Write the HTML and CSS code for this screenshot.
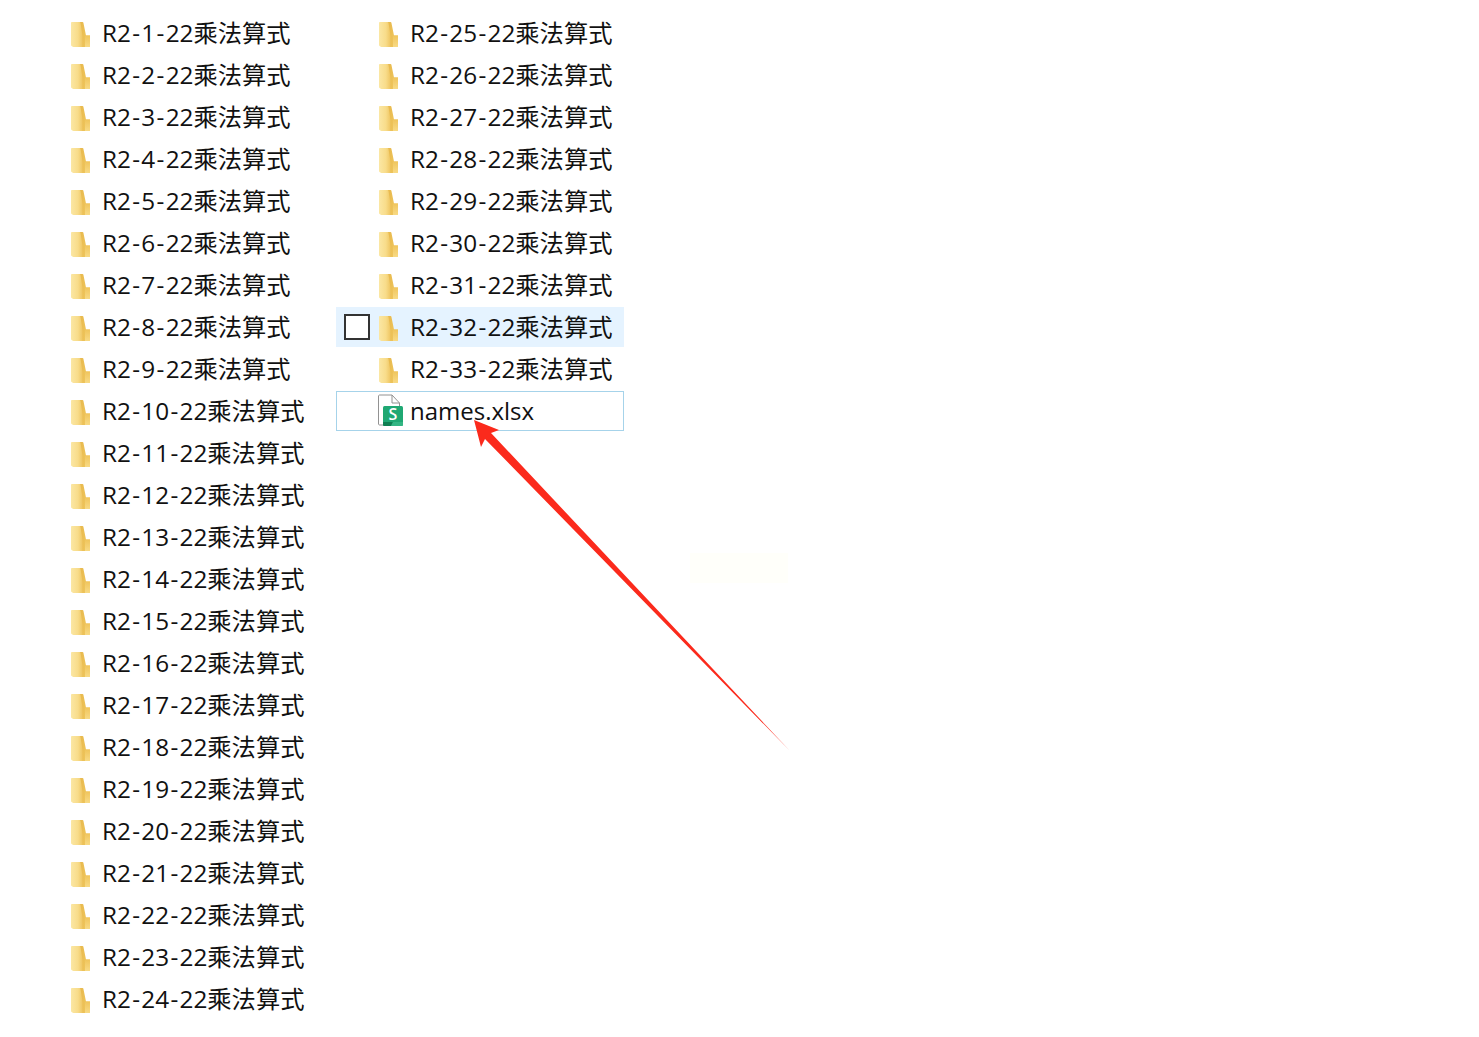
FILE: index.html
```html
<!DOCTYPE html>
<html lang="en">

<head>
    <meta charset="UTF-8">
    <title>names.xlsx</title>
    <link rel="stylesheet" href="styles.css">
</head>

<body>
    <svg class="defs" width="0" height="0">
        <defs>
            <linearGradient id="folder-door" x1="0" y1="0" x2="1" y2="0">
                <stop offset="0" stop-color="#fbe7a4"/>
                <stop offset="0.6" stop-color="#f8dc8a"/>
                <stop offset="1" stop-color="#efc663"/>
            </linearGradient>
            <linearGradient id="folder-back" x1="0" y1="0" x2="1" y2="0.3">
                <stop offset="0" stop-color="#e6b548"/>
                <stop offset="1" stop-color="#f0c860"/>
            </linearGradient>
            <linearGradient id="folder-side" x1="0" y1="0" x2="0" y2="1">
                <stop offset="0" stop-color="#f0c55c"/>
                <stop offset="1" stop-color="#f8da84"/>
            </linearGradient>
            <symbol id="folder" viewBox="0 0 20 28">
                <path d="M8 3h4.500c.5 0 .8.300.9.800L16 16.500h4V28H8z" fill="url(#folder-back)"/>
                <path d="M15 16.500h5V28h-5z" fill="url(#folder-side)"/>
                <path d="M1 3.800c0-.5.300-.8.800-.8h7.800c.5 0 .8.300.9.800L12.500 17v11H7l-.6 2-4.900-3c-.3-.2-.5-.5-.5-.9z" fill="url(#folder-door)"/>
            </symbol>
        </defs>
    </svg>

    <div class="listing">
        <ul id="col1" class="column"></ul>
        <ul id="col2" class="column">
            <li class="file-row">
                <svg class="icon" viewBox="0 0 28 34">
                    <path d="M1.500 2c0-.5.500-1 1-1h12.500l7.500 8v22h-20c-.5 0-1-.5-1-1z" fill="#fff" stroke="#929292" stroke-width="1"/>
                    <path d="M15 1v8h7.500" fill="none" stroke="#929292" stroke-width="1"/>
                    <rect x="6" y="12" width="20" height="20" rx="1.500" fill="#1fa873"/>
                    <path d="M6 28h10l-2 4H7.500A1.500 1.500 0 0 1 6 30.500z" fill="#0f7f52"/>
                    <path d="M16 28h10v2.500a1.500 1.500 0 0 1-1.500 1.500H14z" fill="#33b583"/>
                    <text x="16" y="26" class="sheet-letter">S</text>
                </svg>
                <span class="name">names.xlsx</span>
            </li>
        </ul>
        <svg class="arrow" viewBox="0 0 1479 1037">
            <path d="M474 420L499 430 491 433 790 751 485 439 481 447z" fill="#fb2a1c"/>
        </svg>
        <div class="stamp"></div>
    </div>

    <script>
        const folderRow = (n, hover) => `
            <li class="row${hover ? ' row-hover' : ''}">
                ${hover ? '<span class="check"></span>' : ''}
                <svg class="icon"><use href="#folder"></use></svg>
                <span class="name">R2<span class="dash">-</span>${n}<span class="dash">-</span>22乘法算式</span>
            </li>`

        let col1 = document.getElementById('col1')
        let col2 = document.getElementById('col2')
        let html1 = ''
        let html2 = ''
        for (let i = 1; i <= 24; i++) html1 += folderRow(i, false)
        for (let i = 25; i <= 33; i++) html2 += folderRow(i, i === 32)
        col1.innerHTML = html1
        col2.insertAdjacentHTML('afterbegin', html2)
    </script>
</body>

</html>
```

FILE: styles.css
```css
body {
    margin: 0;
    background-color: #fff;
}

.defs {
    position: absolute;
}

.listing {
    display: flex;
    padding: 13px 0 0 28px;
    height: 1024px;
    box-sizing: border-box;
}

.column {
    list-style: none;
    margin: 0;
    padding: 0;
    width: 288px;
    margin-right: 20px;
    display: flex;
    flex-direction: column;
    gap: 2px;
}

.row,
.file-row {
    position: relative;
    height: 40px;
    box-sizing: border-box;
    display: flex;
    align-items: center;
    padding-left: 42px;
    font: 24.3px/40px "Open Sans", "Noto Sans CJK SC", sans-serif;
    color: #111;
}

.row-hover {
    background-color: #e5f3ff;
}

.file-row {
    border: 1px solid #a6d3ea;
    padding-left: 40px;
    font-size: 24px;
}

.check {
    position: absolute;
    left: 8px;
    top: 7px;
    width: 26px;
    height: 26px;
    box-sizing: border-box;
    border: 2px solid #333;
    background-color: #fff;
}

.icon {
    width: 20px;
    height: 28px;
    flex: none;
    margin-right: 12px;
}

.file-row .icon {
    width: 28px;
    height: 34px;
    margin-right: 5px;
}

.dash {
    margin: 0 1.300px;
}

.sheet-letter {
    font: 600 16px "Open Sans", sans-serif;
    fill: #fff;
    text-anchor: middle;
}

.name {
    white-space: nowrap;
}

.arrow {
    position: absolute;
    left: 0;
    top: 0;
    width: 1479px;
    height: 1037px;
    pointer-events: none;
}

.stamp {
    position: absolute;
    left: 690px;
    top: 553px;
    width: 98px;
    height: 30px;
    background-color: #fffffa;
}
```
